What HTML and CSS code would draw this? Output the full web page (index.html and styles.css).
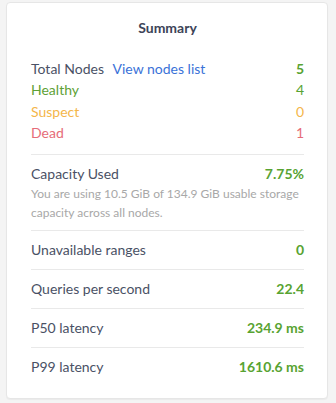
FILE: index.html
```html
<!DOCTYPE html>
<html>
<head>
<meta charset="utf-8">
<link rel="stylesheet" href="styles.css">
</head>
<body>
<div class="page">
  <div class="card">
    <h2 class="title">Summary</h2>
    <div class="section nodes">
      <div class="row">
        <span class="label">Total Nodes <a class="link" href="#">View nodes list</a></span>
        <span class="value green">5</span>
      </div>
      <div class="row">
        <span class="label green-text">Healthy</span>
        <span class="value green-text">4</span>
      </div>
      <div class="row">
        <span class="label yellow">Suspect</span>
        <span class="value yellow">0</span>
      </div>
      <div class="row">
        <span class="label red">Dead</span>
        <span class="value red">1</span>
      </div>
    </div>
    <div class="section capacity">
      <div class="row">
        <span class="label">Capacity Used</span>
        <span class="value green">7.75%</span>
      </div>
      <p class="note">You are using 10.5 GiB of 134.9 GiB usable storage capacity across all nodes.</p>
    </div>
    <div class="section simple">
      <div class="row">
        <span class="label">Unavailable ranges</span>
        <span class="value green">0</span>
      </div>
    </div>
    <div class="section simple">
      <div class="row">
        <span class="label">Queries per second</span>
        <span class="value green">22.4</span>
      </div>
    </div>
    <div class="section simple">
      <div class="row">
        <span class="label">P50 latency</span>
        <span class="value green">234.9 ms</span>
      </div>
    </div>
    <div class="section simple last">
      <div class="row">
        <span class="label">P99 latency</span>
        <span class="value green">1610.6 ms</span>
      </div>
    </div>
  </div>
</div>
</body>
</html>
```

FILE: styles.css
```css
html, body {
  margin: 0;
  padding: 0;
  background: #f4f4f4;
  font-family: Lato, "Liberation Sans", sans-serif;
}
.page {
  padding: 2px 8px 5px 6px;
}
.card {
  background: #fff;
  border: 1px solid #e6e6e6;
  border-radius: 4px;
  padding: 0 23px 0 24px;
  box-shadow: 0 1px 1px rgba(0,0,0,0.04);
}
.title {
  margin: 0;
  padding: 15px 0 0;
  height: 20px;
  line-height: 20px;
  font-size: 14px;
  font-weight: 700;
  text-align: center;
  color: #3d4458;
  margin-bottom: 20px;
}
.section {
  border-bottom: 1px solid #e9e9e9;
}
.section.last {
  border-bottom: none;
  padding-bottom: 21px !important;
}
.nodes {
  padding-bottom: 11px;
}
.nodes .row {
  line-height: 21.3px;
}
.row {
  display: flex;
  justify-content: space-between;
  align-items: baseline;
  font-size: 14px;
  line-height: 20px;
}
.label {
  color: #4a5165;
}
.link {
  color: #3a72d8;
  text-decoration: none;
  margin-left: 5px;
}
.value {
  font-weight: 700;
}
.green { color: #58a332; }
.green-text { color: #5ea136; }
.value.green-text { color: #58a332; }
.yellow { color: #f4b64a; }
.red { color: #e66c78; }
.nodes .value.green-text,
.nodes .value.yellow,
.nodes .value.red { font-weight: 400; }
.capacity {
  padding: 9px 0 8px;
}
.note {
  margin: 0;
  font-size: 12px;
  line-height: 19px;
  color: #a8a8a8;
}
.simple {
  padding: 9px 0;
}
```
